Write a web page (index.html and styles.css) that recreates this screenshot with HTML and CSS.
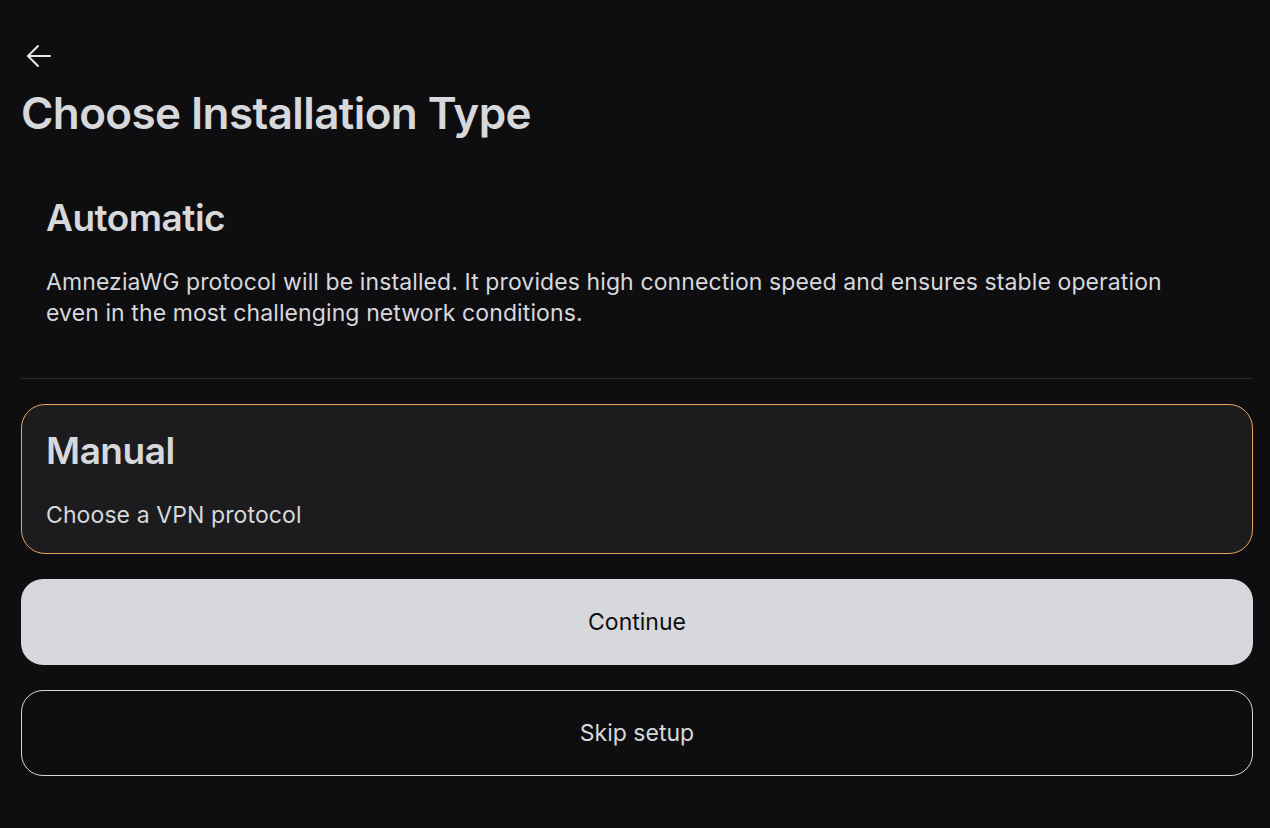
FILE: index.html
```html
<!DOCTYPE html>
<html lang="en">
<head>
    <meta charset="UTF-8">
    <title>Choose Installation Type</title>
    <link rel="stylesheet" href="styles.css">
</head>
<body>
    <div class="container">
        <div class="top-bar">
            <button class="back-button" aria-label="Back">
                <svg width="28" height="28" viewBox="0 0 28 28" fill="none" stroke="#e6e7ea" stroke-width="2" stroke-linecap="round" stroke-linejoin="round">
                    <path d="M25 14H3"/>
                    <path d="M13 4L3 14L13 24"/>
                </svg>
            </button>
        </div>

        <h1 class="title">Choose Installation Type</h1>

        <div class="option first">
            <h2>Automatic</h2>
            <p>AmneziaWG protocol will be installed. It provides high connection speed and ensures stable operation even in the most challenging network conditions.</p>
        </div>

        <div class="divider"></div>

        <div class="option selected">
            <h2>Manual</h2>
            <p>Choose a VPN protocol</p>
        </div>

        <div class="actions">
            <button class="btn primary">Continue</button>
            <button class="btn outline">Skip setup</button>
        </div>
    </div>
</body>
</html>
```

FILE: styles.css
```css
body {
    margin: 0;
    background: #0e0e11;
    color: #d7d8db;
    font-family: 'Inter', 'Noto Sans', sans-serif;
}
.container {
    margin: 0 17px 0 21px;
    padding-top: 40px;
}
.top-bar {
    height: 32px;
    display: flex;
    align-items: center;
}
.back-button {
    background: none;
    border: none;
    padding: 0;
    margin-left: 4px;
    width: 28px;
    height: 28px;
    cursor: pointer;
}
.title {
    margin: 13px 0 0;
    font-size: 44px;
    font-weight: 600;
    letter-spacing: -0.6px;
    line-height: 56px;
    color: #d7d8db;
}
.option {
    border: 1.5px solid transparent;
    border-radius: 24px;
    padding: 23px 50px 22px 24px;
}
.option h2 {
    margin: 0;
    font-size: 37px;
    font-weight: 600;
    line-height: 46px;
    letter-spacing: -0.5px;
    color: #d7d8db;
}
.option p {
    margin: 26px 0 0;
    font-size: 23px;
    line-height: 31px;
    letter-spacing: 0.1px;
    color: #d7d8db;
}
.first {
    margin-top: 30px;
}
.selected {
    background: #1c1c1f;
    border-color: #e9a55d;
}
.divider {
    height: 1px;
    background: #2c2c2f;
    margin: 26px 0 25px;
}
.actions {
    display: flex;
    flex-direction: column;
    gap: 25px;
    margin-top: 25px;
}
.btn {
    height: 86px;
    border-radius: 22px;
    font-family: 'Inter', 'Noto Sans', sans-serif;
    font-size: 23px;
    cursor: pointer;
}
.primary {
    background: #d7d8db;
    border: none;
    color: #0e0e11;
}
.outline {
    background: transparent;
    border: 1.5px solid #d7d8db;
    color: #d7d8db;
}
```
